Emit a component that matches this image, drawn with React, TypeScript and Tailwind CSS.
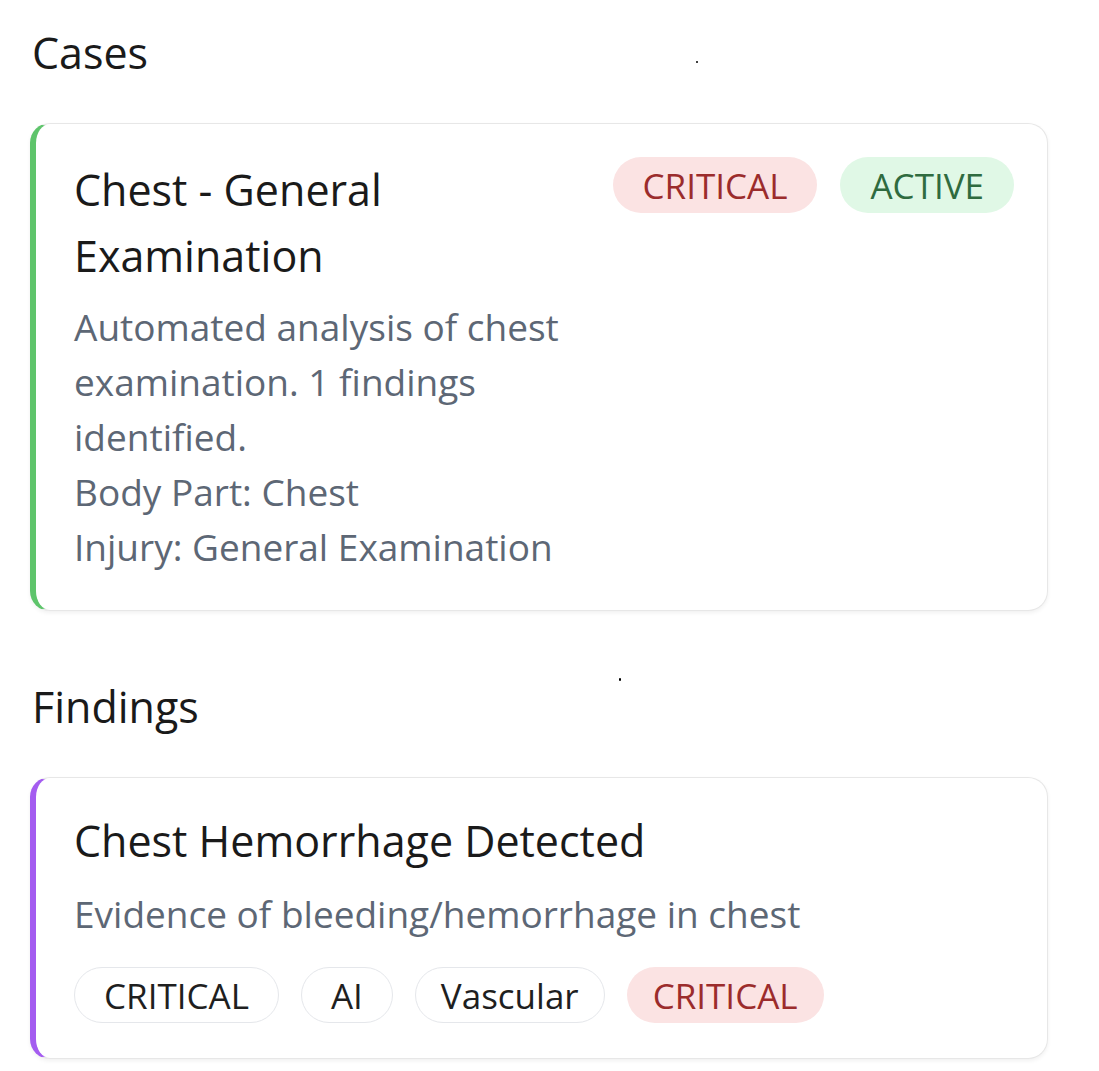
import React from "react";

type Tag = { label: string; tone: "outline" | "red" | "green"; tight?: boolean };

function Pill({ tag }: { tag: Tag }) {
  const tone =
    tag.tone === "red"
      ? "bg-[#fbe3e3] text-[#9b2c2c] border-transparent"
      : tag.tone === "green"
        ? "bg-[#e0f8e6] text-[#2f6b3f] border-transparent"
        : "bg-white text-[#1f1f1f] border-[#e5e7eb]";
  return (
    <span
      className={`inline-flex h-[56px] items-center rounded-full border text-[35px] leading-none ${
        tag.tight ? "px-[25px]" : "px-[29px]"
      } ${tone}`}
    >
      {tag.label}
    </span>
  );
}

export default function App() {
  return (
    <div
      className="relative min-h-screen bg-white pl-[30px] pt-[27px] text-[#1a1a1a]"
      style={{ fontFamily: '"Open Sans", "Noto Sans", sans-serif' }}
    >
      {/* stray dots from the capture */}
      <span className="absolute left-[696px] top-[61px] h-[2px] w-[2px] rounded-full bg-black" />
      <span className="absolute left-[619px] top-[678px] h-[3px] w-[2px] rounded-full bg-black" />

      {/* Cases */}
      <h2 className="pl-[2px] text-[43px] leading-[52px]">Cases</h2>
      <div className="mt-[44px] w-[1018px] rounded-[20px] border border-l-[6px] border-[#e7e7e7] border-l-[#5ec46b] bg-white pb-[36px] pl-[38px] pr-[33px] pt-[33px] shadow-[0_2px_4px_rgba(0,0,0,0.06)]">
        <div className="flex items-start gap-[24px]">
          <div className="min-w-0 flex-1">
            <h3 className="text-[43px] leading-[66px]">Chest - General Examination</h3>
            <p className="mt-[10px] text-[37px] leading-[55px] text-[#5d6775]">
              Automated analysis of chest examination. 1 findings identified.
            </p>
            <p className="text-[37px] leading-[55px] text-[#5d6775]">Body Part: Chest</p>
            <p className="text-[37px] leading-[55px] text-[#5d6775]">Injury: General Examination</p>
          </div>
          <div className="flex shrink-0 gap-[23px]">
            <Pill tag={{ label: "CRITICAL", tone: "red" }} />
            <Pill tag={{ label: "ACTIVE", tone: "green" }} />
          </div>
        </div>
      </div>

      {/* Findings */}
      <h2 className="mt-[70px] pl-[2px] text-[43px] leading-[52px]">Findings</h2>
      <div className="mt-[44px] w-[1018px] rounded-[20px] border border-l-[6px] border-[#e7e7e7] border-l-[#a45cf0] bg-white pb-[35px] pl-[38px] pr-[33px] pt-[30px] shadow-[0_2px_4px_rgba(0,0,0,0.06)]">
        <h3 className="text-[43px] leading-[66px]">Chest Hemorrhage Detected</h3>
        <p className="mt-[12px] text-[37px] leading-[55px] text-[#5d6775]">
          Evidence of bleeding/hemorrhage in chest
        </p>
        <div className="mt-[26px] flex flex-wrap gap-[22px]">
          <Pill tag={{ label: "CRITICAL", tone: "outline" }} />
          <Pill tag={{ label: "AI", tone: "outline" }} />
          <Pill tag={{ label: "Vascular", tone: "outline", tight: true }} />
          <Pill tag={{ label: "CRITICAL", tone: "red", tight: true }} />
        </div>
      </div>
    </div>
  );
}
